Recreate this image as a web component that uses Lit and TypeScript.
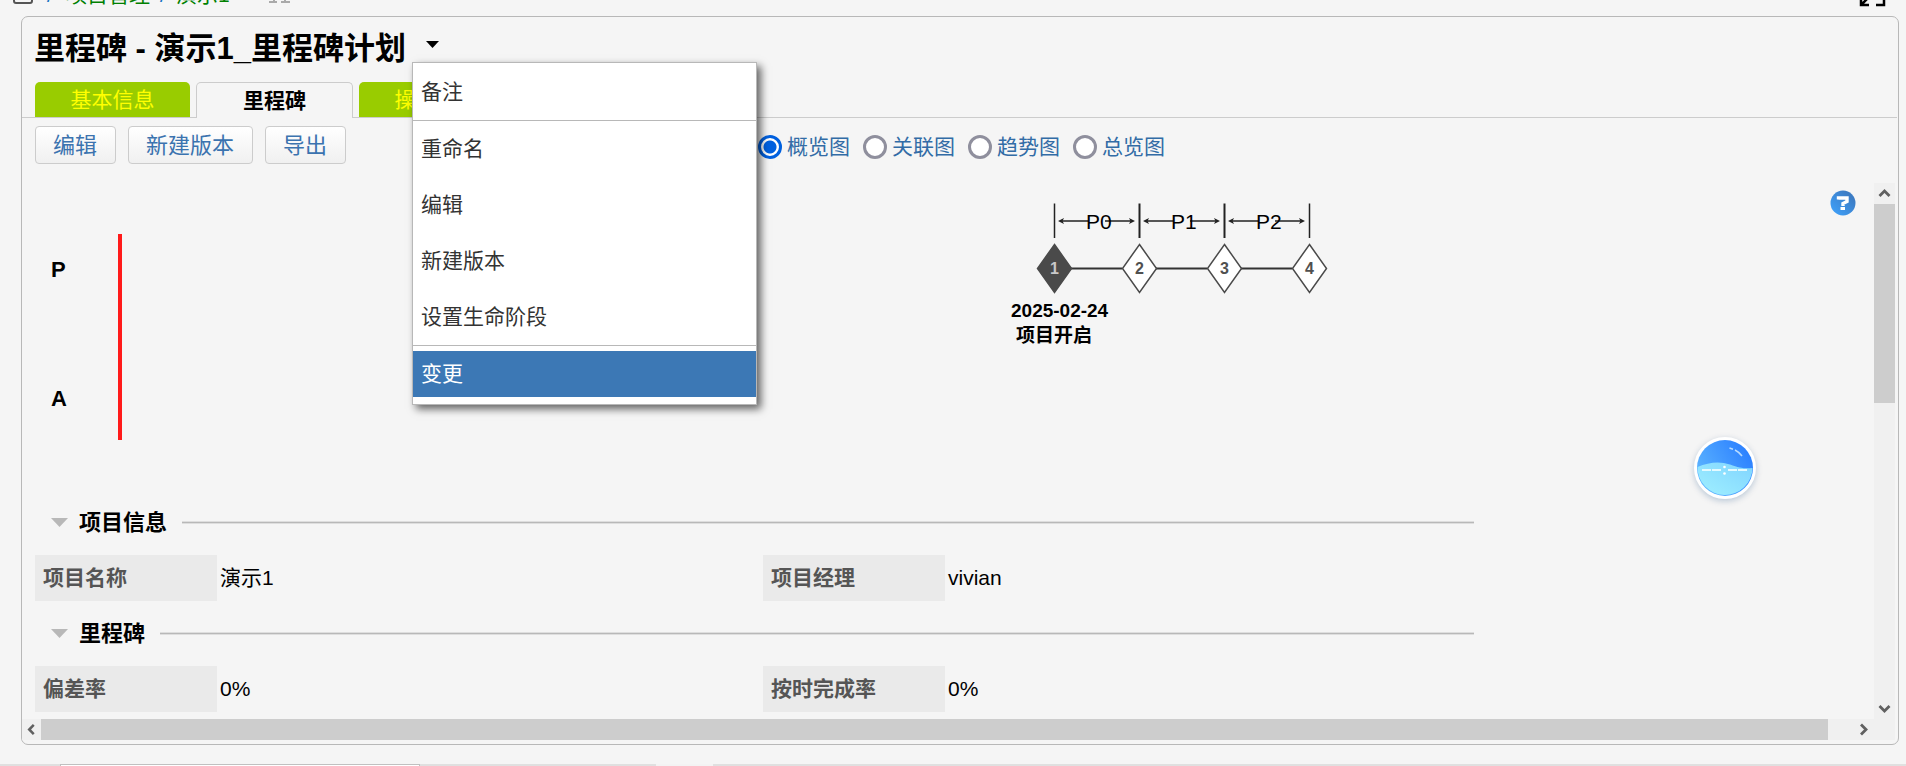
import { LitElement, html, svg, css } from "lit";
import { customElement, state } from "lit/decorators.js";

interface Field {
  label: string;
  value: string;
}

const MENU: string[][] = [["备注"], ["重命名", "编辑", "新建版本", "设置生命阶段"], ["变更"]];
const TABS = ["基本信息", "里程碑", "操作日志"];
const ACTIONS = ["编辑", "新建版本", "导出"];
const VIEWS = ["概览图", "关联图", "趋势图", "总览图"];
const SECTIONS: { title: string; fields: Field[] }[] = [
  {
    title: "项目信息",
    fields: [
      { label: "项目名称", value: "演示1" },
      { label: "项目经理", value: "vivian" },
    ],
  },
  {
    title: "里程碑",
    fields: [
      { label: "偏差率", value: "0%" },
      { label: "按时完成率", value: "0%" },
    ],
  },
];

@customElement("milestone-chart")
class MilestoneChart extends LitElement {
  static styles = css`
    :host {
      display: block;
    }
    svg {
      display: block;
    }
    text {
      font-family: "Liberation Sans", "Noto Sans CJK SC", sans-serif;
    }
    .phase {
      font-size: 21px;
      fill: #000;
    }
    .number {
      font-size: 16px;
      font-weight: bold;
      fill: #505050;
      text-anchor: middle;
    }
    .number.done {
      fill: #c8c8c8;
    }
    .caption {
      font-size: 19px;
      font-weight: bold;
      fill: #000;
    }
  `;

  private phase(i: number) {
    const x = 54 + i * 85;
    return svg`
      <path d="M${x + 8} 38H${x + 34}M${x + 51} 38H${x + 78}" stroke="#222" stroke-width="1.4" />
      <path d="M${x + 4} 38l6 -3l-1.500 3l1.500 3zM${x + 81} 38l-6 -3l1.500 3l-1.500 3z" fill="#222" />
      <text class="phase" x=${x + 32} y="46">P${i}</text>
      <path d="M${x + 17} 85.500H${x + 68}" stroke="#333" stroke-width="2" />`;
  }

  private node(i: number) {
    const x = 54.5 + i * 85;
    const done = i === 0;
    return svg`
      <path d="M${x} 20.500V55" stroke="#222" stroke-width=${i === 1 || i === 2 ? 2 : 1.5} />
      <path d="M${x} 61.500L${x + 17} 85.500L${x} 109.500L${x - 17} 85.500Z"
        fill=${done ? "#4a4a4a" : "#fff"} stroke="#4a4a4a" stroke-width="1.500" />
      <text class=${done ? "number done" : "number"} x=${x} y="91">${i + 1}</text>`;
  }

  render() {
    return html`<svg width="340" height="180" viewBox="0 0 340 180" role="img" aria-label="P0 P1 P2">
      ${[0, 1, 2].map((i) => this.phase(i))} ${[0, 1, 2, 3].map((i) => this.node(i))}
      <text class="caption" x="11" y="134">2025-02-24</text>
      <text class="caption" x="16" y="159">项目开启</text>
    </svg>`;
  }
}

@customElement("app-root")
class AppRoot extends LitElement {
  @state() private view = 0;

  static styles = css`
    :host {
      display: flex;
      flex-direction: column;
      position: relative;
      height: 100vh;
      overflow: hidden;
      box-sizing: border-box;
      background: #f5f5f5;
      color: #000;
      font: 21px/30px "Liberation Sans", "Noto Sans CJK SC", sans-serif;
    }
    * {
      box-sizing: border-box;
    }
    button,
    input {
      font: inherit;
      margin: 0;
    }
    svg {
      display: block;
      flex: none;
    }

    .crumbs {
      display: flex;
      align-items: flex-end;
      flex: none;
      height: 16px;
      padding: 0 20px 6px 12px;
      color: #1a74c4;
    }
    .crumbs a {
      color: #008000;
      text-decoration: none;
    }
    .crumbs .sep {
      width: 26px;
      text-align: center;
    }
    .crumbs .first {
      width: 32px;
    }
    .crumbs .star {
      margin-left: 36px;
    }
    .crumbs .expand {
      margin-left: auto;
    }

    .panel {
      display: flex;
      flex-direction: column;
      flex: 1;
      min-height: 0;
      margin: 0 7px 0 21px;
      padding-bottom: 4px;
      border: 1px solid #b8b8b8;
      border-radius: 7px;
    }
    .title {
      display: flex;
      align-items: flex-start;
      flex: none;
      height: 65px;
      padding-left: 12px;
    }
    h1 {
      margin: 0;
      font-size: 31px;
      line-height: 64px;
      white-space: nowrap;
    }
    .dropdown {
      position: relative;
      margin-left: 6px;
    }
    .toggle {
      display: flex;
      padding: 24px 14px 14px;
      border: 0;
      background: none;
    }
    .menu {
      position: absolute;
      z-index: 2;
      top: 45px;
      left: 0;
      width: 345px;
      padding: 6px 0 7px;
      border: 1px solid #b8b8b8;
      background: #fff;
      box-shadow: 4px 4px 8px rgba(0, 0, 0, 0.6);
    }
    .group {
      display: flex;
      flex-direction: column;
      gap: 10px;
    }
    .group + .group {
      margin-top: 5px;
      padding-top: 5px;
      border-top: 1px solid #b8b8b8;
    }
    .item {
      height: 46px;
      padding: 0 8px;
      border: 0;
      background: none;
      color: #333;
      text-align: left;
    }
    .item.current {
      background: #3c78b5;
      color: #fff;
    }

    .tabs {
      display: flex;
      align-items: flex-start;
      gap: 6px;
      flex: none;
      height: 36px;
      margin-right: 1px;
      padding-left: 13px;
      border-bottom: 1px solid #ccc;
    }
    .tab {
      width: 155px;
      height: 35px;
      padding: 0;
      border: 0;
      border-radius: 5px 5px 0 0;
      background: #99cc00;
      color: #ffff00;
    }
    .tab.active {
      width: 157px;
      height: 36px;
      border: 1px solid #ccc;
      border-bottom: 0;
      background: #f5f5f5;
      color: #000;
      font-weight: bold;
    }

    .toolbar {
      display: flex;
      align-items: flex-end;
      gap: 12px;
      flex: none;
      padding: 8px 13px 19px;
    }
    .action {
      height: 38px;
      padding: 2px 18px 0 17px;
      border: 1px solid #ccc;
      border-radius: 4px;
      background: linear-gradient(#fff, #f0f0f0);
      color: #3b73af;
      font-size: 22px;
      line-height: 30px;
      white-space: nowrap;
    }
    .views {
      display: flex;
      gap: 13px;
      margin-left: 400px;
      color: #326ca6;
    }
    .view {
      display: flex;
      align-items: center;
      gap: 5px;
      height: 34px;
      white-space: nowrap;
    }
    .view input {
      appearance: none;
      flex: none;
      width: 24px;
      height: 24px;
      border: 3px solid #8f8f9d;
      border-radius: 50%;
      background: #fff;
    }
    .view input:checked {
      border-color: #0060df;
      background: radial-gradient(circle, #0060df 6px, #fff 7px);
    }

    .scroller {
      display: grid;
      grid-template-columns: minmax(0, 1fr) 21px;
      grid-template-rows: minmax(0, 1fr) 21px;
      flex: 1;
      min-height: 0;
      margin-right: 3px;
    }
    .content {
      overflow: hidden;
      padding-left: 13px;
    }
    .bar {
      display: flex;
      align-items: center;
      background: #f0f0f0;
    }
    .bar.v {
      flex-direction: column;
    }
    .thumb {
      flex: none;
      background: #cdcdcd;
    }
    .v .thumb {
      width: 21px;
      height: 199px;
    }
    .h .thumb {
      flex: 1;
      height: 21px;
      margin-right: 25px;
    }
    .h svg:first-child {
      width: 19px;
    }
    .v svg:last-child {
      margin-top: auto;
    }
    .corner {
      background: #f0f0f0;
    }

    .overview {
      display: flex;
      align-items: flex-start;
      height: 307px;
    }
    .axis {
      display: flex;
      flex-direction: column;
      gap: 99px;
      width: 83px;
      padding: 72px 0 0 16px;
      font-size: 22px;
      font-weight: bold;
    }
    .today {
      width: 4px;
      height: 206px;
      margin: 51px 878px 0 0;
      background: #ff1a1a;
    }
    .help {
      margin: 7px 18px 0 auto;
      padding: 0;
      border: 0;
      background: none;
    }

    .section {
      max-width: 1439px;
    }
    .section h2 {
      display: flex;
      align-items: center;
      height: 45px;
      margin: 10px 0;
      padding-left: 16px;
      font-size: 22px;
      line-height: 30px;
    }
    .section h2 svg {
      margin-right: 11px;
    }
    .rule {
      flex: 1;
      height: 3px;
      margin-left: 15px;
      border: solid #dedede;
      border-width: 1px 0;
      background: #b8b8b8;
    }
    table {
      width: 100%;
      border-collapse: collapse;
      table-layout: fixed;
    }
    th,
    td {
      height: 46px;
      padding: 0 3px;
      text-align: left;
    }
    th {
      width: 182px;
      padding-left: 8px;
      background: #eaeaea;
      color: #555;
    }
    td:nth-child(2) {
      width: 546px;
    }

    .ball {
      position: absolute;
      z-index: 1;
      right: 150px;
      bottom: 267px;
      padding: 0;
      border: 3px solid #fff;
      border-radius: 50%;
      background: #fff;
      box-shadow: 0 2px 6px rgba(0, 60, 120, 0.25);
    }

    .footer {
      display: flex;
      flex: none;
      height: 2px;
      margin-top: 19px;
      padding-left: 60px;
      background: #e0e0e0;
    }
    .window-tab {
      width: 360px;
      border: 1px solid #c0c0c0;
      border-bottom: 0;
      background: #fff;
    }
    .window-gap {
      width: 57px;
      margin-left: 236px;
      background: #f3f3f3;
    }
  `;

  private chevron(angle: number) {
    return html`<svg width="21" height="21" viewBox="0 0 21 21" aria-hidden="true">
      <path
        d="M5.500 13L10.500 8L15.500 13"
        fill="none"
        stroke="#606060"
        stroke-width="2.800"
        transform="rotate(${angle} 10.500 10.500)"
      />
    </svg>`;
  }

  render() {
    return html`
      <nav class="crumbs" aria-label="路径">
        <svg width="22" height="20" viewBox="0 0 22 20" aria-hidden="true">
          <rect x="2" y="-6" width="18" height="19" rx="2" fill="none" stroke="#555" stroke-width="2" />
        </svg>
        <span class="sep first">/</span>
        <a href="#project">项目管理</a>
        <span class="sep">/</span>
        <a href="#demo">演示1</a>
        <svg class="star" width="26" height="20" viewBox="0 0 26 20" aria-hidden="true">
          <path d="M8 6V12M19 6V12M3 12H11M15 12H24" stroke="#aaa" stroke-width="2" />
        </svg>
        <svg class="expand" width="27" height="20" viewBox="0 0 27 20" aria-hidden="true">
          <path d="M2 6V15H10M3 14L12 5M17 15H25V6" fill="none" stroke="#000" stroke-width="2.500" />
        </svg>
      </nav>

      <main class="panel">
        <header class="title">
          <h1>里程碑 - 演示1_里程碑计划</h1>
          <div class="dropdown">
            <button class="toggle" aria-label="菜单" aria-expanded="true">
              <svg width="13" height="7" viewBox="0 0 13 7"><path d="M0 0H13L6.500 7Z" fill="#000" /></svg>
            </button>
            <div class="menu" role="menu">
              ${MENU.map(
                (group) => html`<div class="group" role="group">
                  ${group.map(
                    (item) =>
                      html`<button class="item ${item === "变更" ? "current" : ""}" role="menuitem">${item}</button>`
                  )}
                </div>`
              )}
            </div>
          </div>
        </header>

        <div class="tabs" role="tablist">
          ${TABS.map(
            (tab, i) =>
              html`<button class="tab ${i === 1 ? "active" : ""}" role="tab" aria-selected=${i === 1}>${tab}</button>`
          )}
        </div>

        <div class="toolbar">
          ${ACTIONS.map((action) => html`<button class="action">${action}</button>`)}
          <div class="views" role="radiogroup">
            ${VIEWS.map(
              (label, i) => html`<label class="view"
                ><input type="radio" name="view" .checked=${this.view === i} @change=${() => (this.view = i)} />${label}</label
              >`
            )}
          </div>
        </div>

        <div class="scroller">
          <div class="content">
            <div class="overview">
              <div class="axis"><span>P</span><span>A</span></div>
              <div class="today"></div>
              <milestone-chart></milestone-chart>
              <button class="help" aria-label="帮助">
                <svg width="26" height="26" viewBox="0 0 26 26">
                  <defs>
                    <linearGradient id="help" x1="1" y1="0" x2="0" y2="1">
                      <stop offset="0.200" stop-color="#3c7cc4" />
                      <stop offset="1" stop-color="#3fa4ff" />
                    </linearGradient>
                  </defs>
                  <circle cx="13" cy="13" r="12.500" fill="url(#help)" />
                  <path d="M8.500 9.500V8H17V11.500L13 13.500V16" fill="none" stroke="#fff" stroke-width="3.400" />
                  <path d="M10.500 17H15V20H10.500Z" fill="#fff" />
                </svg>
              </button>
            </div>
            ${SECTIONS.map(
              (section) => html`<section class="section">
                <h2>
                  <svg width="17" height="9" viewBox="0 0 17 9" aria-hidden="true">
                    <path d="M0 0H17L8.500 9Z" fill="#b8b8b8" />
                  </svg>
                  ${section.title}<span class="rule"></span>
                </h2>
                <table>
                  <tr>
                    ${section.fields.map((f) => html`<th scope="row">${f.label}</th><td>${f.value}</td>`)}
                  </tr>
                </table>
              </section>`
            )}
          </div>
          <div class="bar v">${this.chevron(0)}<div class="thumb"></div>${this.chevron(180)}</div>
          <div class="bar h">${this.chevron(-90)}<div class="thumb"></div>${this.chevron(90)}</div>
          <div class="corner"></div>
        </div>
      </main>

      <button class="ball" aria-label="助手">
        <svg width="56" height="56" viewBox="0 0 56 56">
          <defs>
            <linearGradient id="sky" x1="0" y1="0.600" x2="1" y2="0">
              <stop offset="0" stop-color="#5cb4ff" />
              <stop offset="1" stop-color="#2478ff" />
            </linearGradient>
            <linearGradient id="sea" x1="0" y1="1" x2="1" y2="0">
              <stop offset="0" stop-color="#a0f0ff" />
              <stop offset="1" stop-color="#80d4ff" />
            </linearGradient>
          </defs>
          <circle cx="28" cy="28" r="28" fill="url(#sky)" />
          <path d="M0.500 27C12 22 23 21 33 24.500S48 29 55.500 28A27.500 27.500 0 0 1 0.500 27Z" fill="url(#sea)" />
          <path d="M5 30H14M15 30H24M31 30H40M41 30H50" stroke="#e4faff" stroke-width="2" />
          <circle cx="27.500" cy="27" r="1.300" fill="#fff" />
          <circle cx="27.500" cy="33.500" r="1.300" fill="#fff" />
          <path d="M32.500 8L36 9.200M38 10Q42 12 45 16" fill="none" stroke="#b8dcff" stroke-width="1.500" />
        </svg>
      </button>

      <div class="footer"><div class="window-tab"></div><div class="window-gap"></div></div>
    `;
  }
}
